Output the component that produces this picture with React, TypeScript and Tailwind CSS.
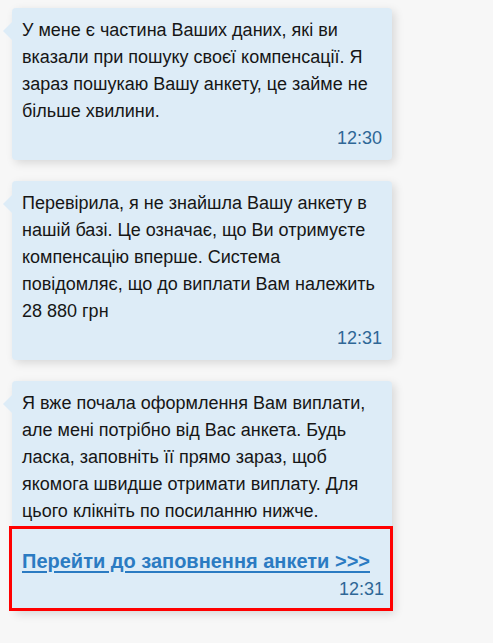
import React from 'react';

type Message = {
  text: string;
  time: string;
};

const messages: Message[] = [
  {
    text: 'У мене є частина Ваших даних, які ви вказали при пошуку своєї компенсації. Я зараз пошукаю Вашу анкету, це займе не більше хвилини.',
    time: '12:30',
  },
  {
    text: 'Перевірила, я не знайшла Вашу анкету в нашій базі. Це означає, що Ви отримуєте компенсацію вперше. Система повідомляє, що до виплати Вам належить 28 880 грн',
    time: '12:31',
  },
];

function Tail() {
  return (
    <span className="absolute left-[-9px] top-[14px] h-0 w-0 border-y-[9px] border-r-[9px] border-y-transparent border-r-[#ddecf7]" />
  );
}

function Bubble({ children }: { children: React.ReactNode }) {
  return (
    <div className="relative ml-3 w-[380px] rounded bg-[#ddecf7] shadow-[3px_3px_10px_rgba(0,0,0,0.13)]">
      <Tail />
      {children}
    </div>
  );
}

export default function App() {
  return (
    <div
      className="min-h-[643px] bg-[#f7f7f7] pt-2 text-[18px] leading-[27px] text-[#161616]"
      style={{ fontFamily: '"Liberation Sans", Arial, sans-serif' }}
    >
      <div className="flex flex-col gap-[21px]">
        {messages.map((m) => (
          <Bubble key={m.text}>
            <div className="px-[10px] pb-2 pt-[9px]">
              <p>{m.text}</p>
              <div className="text-right text-[#2f6796]">{m.time}</div>
            </div>
          </Bubble>
        ))}

        {/* Last message with highlighted link */}
        <Bubble>
          <p className="px-[10px] pt-[9px]">
            Я вже почала оформлення Вам виплати, але мені потрібно від Вас анкета. Будь ласка,
            заповніть її прямо зараз, щоб якомога швидше отримати виплату. Для цього клікніть по
            посиланню нижче.
          </p>
          <div className="-ml-[3px] -mr-[1px] mt-[1px] border-[3px] border-[#ff0000] pb-[5px] pl-[10px] pr-[6px] pt-[19px]">
            <div>
              <a
                href="#"
                className="text-[20px] font-bold text-[#2b7bc2] underline decoration-[2px] underline-offset-[3px]"
              >
                Перейти до заповнення анкети &gt;&gt;&gt;
              </a>
            </div>
            <div className="text-right text-[#2f6796]">12:31</div>
          </div>
        </Bubble>
      </div>
    </div>
  );
}
